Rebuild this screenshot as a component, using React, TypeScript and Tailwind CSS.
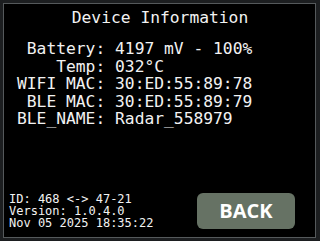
import React from 'react';

const rows = [
  ' Battery: 4197 mV - 100%',
  '    Temp: 032°C',
  'WIFI MAC: 30:ED:55:89:78',
  ' BLE MAC: 30:ED:55:89:79',
  'BLE_NAME: Radar_558979',
];

export default function App() {
  return (
    <div className="w-[320px] h-[241px] bg-[#1c1e20] pt-[3px] pl-[3px] overflow-hidden">
      <div
        className="w-[313px] h-[235px] border border-[#55595b] bg-black flex flex-col text-[#f2f2f2]"
        style={{ fontFamily: '"DejaVu Sans Mono", monospace' }}
      >
        <div className="pt-[4px] text-[16.3px] leading-[20px] text-center pl-[1px]">Device Information</div>

        <div className="mt-[12px] pl-[13px] text-[16.3px] leading-[17.5px]">
          {rows.map((r) => (
            <div key={r} className="whitespace-pre">
              {r}
            </div>
          ))}
        </div>

        <div className="flex-1" />

        <div className="flex items-end justify-between pl-[5px] pr-[20px] pb-[8px]">
          <div className="text-[12px] leading-[12px] whitespace-pre pb-[0.5px]">
            <div>ID: 468 &lt;-&gt; 47-21</div>
            <div>Version: 1.0.4.0</div>
            <div>Nov 05 2025 18:35:22</div>
          </div>
          <button
            className="w-[98px] h-[36px] rounded-[6px] bg-[#667264] text-white text-[20px] font-bold flex items-center justify-center"
            style={{ fontFamily: '"Open Sans", sans-serif' }}
          >
            BACK
          </button>
        </div>
      </div>
    </div>
  );
}
